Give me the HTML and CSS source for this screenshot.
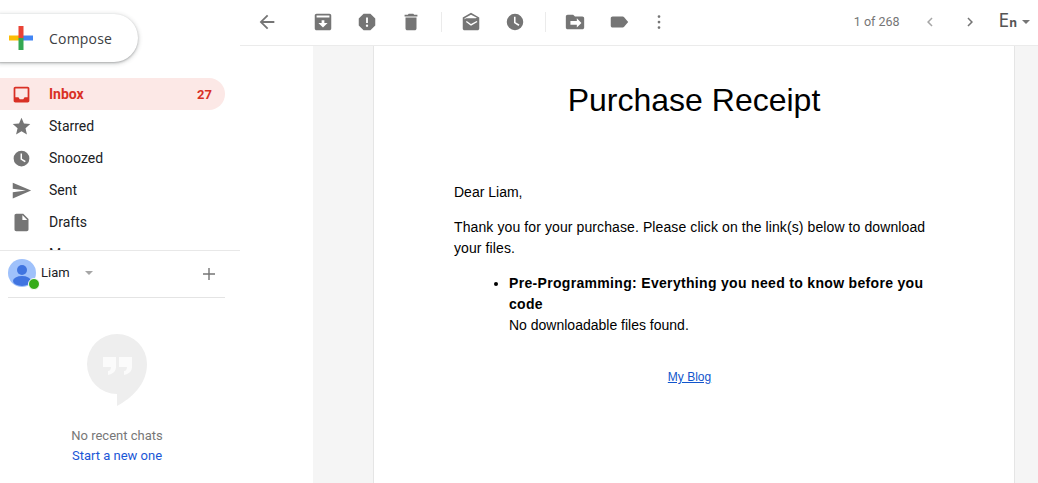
FILE: index.html
```html
<!DOCTYPE html>
<html lang="en">
<head>
    <meta charset="UTF-8">
    <meta name="viewport" content="width=device-width, initial-scale=1.0">
    <title>Purchase Receipt</title>
    <link rel="stylesheet" href="styles.css">
</head>
<body>
    <div class="app">
        <aside class="sidebar">
            <div class="compose-wrap">
                <button class="compose">
                    <svg class="compose-plus" width="24" height="24" viewBox="0 0 24 24">
                        <rect x="0" y="9.5" width="12" height="5" fill="#fbbc04"/>
                        <rect x="12" y="9.5" width="12" height="5" fill="#4285f4"/>
                        <rect x="9.5" y="0" width="5" height="12" fill="#ea4335"/>
                        <rect x="9.5" y="12" width="5" height="12" fill="#34a853"/>
                    </svg>
                    <span>Compose</span>
                </button>
            </div>

            <nav class="nav">
                <a class="nav-item active">
                    <svg class="nav-icon" viewBox="0 0 24 24"><path fill="#d93025" d="M19 3H5c-1.1 0-2 .9-2 2v14c0 1.1.9 2 2 2h14c1.1 0 2-.9 2-2V5c0-1.1-.9-2-2-2zm0 12h-3.500l-1.500 2.500h-4L8.500 15H5V5h14z"/></svg>
                    <span class="nav-label">Inbox</span>
                    <span class="nav-count">27</span>
                </a>
                <a class="nav-item">
                    <svg class="nav-icon" viewBox="0 0 24 24"><path fill="#757575" d="M12 17.300l6.200 3.700-1.600-7L22 9.200l-7.200-.6L12 2 9.200 8.600 2 9.200 7.500 14l-1.700 7z"/></svg>
                    <span class="nav-label">Starred</span>
                </a>
                <a class="nav-item">
                    <svg class="nav-icon" viewBox="0 0 24 24"><path fill="#757575" d="M12 3a9 9 0 1 0 0 18 9 9 0 0 0 0-18zm3.800 13.300L10.900 13V6.400h1.700v5.800l4.300 2.600z"/></svg>
                    <span class="nav-label">Snoozed</span>
                </a>
                <a class="nav-item">
                    <svg class="nav-icon" viewBox="0 0 24 24"><path fill="#757575" d="M2 21l21-9L2 3v7l15 2-15 2z"/></svg>
                    <span class="nav-label">Sent</span>
                </a>
                <a class="nav-item">
                    <svg class="nav-icon" viewBox="0 0 24 24"><path fill="#757575" d="M14 2H6c-1.100 0-2 .9-2 2v16c0 1.100.9 2 2 2h12c1.100 0 2-.9 2-2V8zm-1 7V3.500L18.500 9z"/></svg>
                    <span class="nav-label">Drafts</span>
                </a>
                <a class="nav-item">
                    <span class="nav-label nav-more">More</span>
                </a>
            </nav>

            <div class="hangouts">
                <div class="user-row">
                    <div class="avatar">
                        <svg width="28" height="28" viewBox="0 0 28 28">
                            <circle cx="14" cy="14" r="14" fill="#9fc1fb"/>
                            <circle cx="14" cy="11" r="5" fill="#4074e0"/>
                            <ellipse cx="14" cy="22" rx="9" ry="5" fill="#4074e0"/>
                        </svg>
                        <span class="status-dot"></span>
                    </div>
                    <span class="user-name">Liam</span>
                    <span class="user-caret"></span>
                    <svg class="user-add" width="14" height="14" viewBox="0 0 14 14"><path fill="#757575" d="M6.300 1h1.400v5.300H13v1.400H7.700V13H6.300V7.700H1V6.300h5.300z"/></svg>
                </div>
                <div class="chats">
                    <svg class="bubble" width="60" height="72" viewBox="0 0 60 72">
                        <path fill="#eeeeee" d="M30 0a30 30 0 0 0 0 60v12c15-8 30-22 30-42A30 30 0 0 0 30 0z"/>
                        <path fill="#fbfbfb" d="M16 23h13v10c0 4-3 7-8 8v-4c2 0 3-2 3-4h-8zM32 23h13v10c0 4-3 7-8 8v-4c2 0 3-2 3-4h-8z"/>
                    </svg>
                    <p class="no-chats">No recent chats</p>
                    <a class="new-chat">Start a new one</a>
                </div>
            </div>
        </aside>

        <main class="main">
            <div class="toolbar">
                <svg class="tool tool-back" viewBox="0 0 24 24"><path fill="#757575" d="M20 11H7.800l5.600-5.600L12 4l-8 8 8 8 1.400-1.400L7.800 13H20z"/></svg>
                <svg class="tool" viewBox="0 0 24 24"><path fill="#757575" d="M19 3H5c-1.100 0-2 .9-2 2v14c0 1.100.9 2 2 2h14c1.100 0 2-.9 2-2V5c0-1.100-.9-2-2-2zm-7 15l-5-5h3.500v-3h3v3H17zM5 7V5h14v2z"/></svg>
                <svg class="tool" viewBox="0 0 24 24"><path fill="#757575" d="M15.700 3H8.300L3 8.300v7.400L8.300 21h7.400l5.300-5.300V8.300zM12 17.300a1.300 1.300 0 1 1 0-2.600 1.300 1.300 0 0 1 0 2.600zm1-4.300h-2V7h2z"/></svg>
                <svg class="tool" viewBox="0 0 24 24"><path fill="#757575" d="M6 19c0 1.100.9 2 2 2h8c1.100 0 2-.9 2-2V7H6zM19 4h-3.500l-1-1h-5l-1 1H5v2h14z"/></svg>
                <span class="tool-sep"></span>
                <svg class="tool" viewBox="0 0 24 24"><path fill="#757575" d="M12 2L3 7v12c0 1.100.9 2 2 2h14c1.100 0 2-.9 2-2V7zM5 7.900L12 4l6.500 3.400-1.500.6H7c-1.100 0-2 .9-2 2zM19 12l-7 4-5.500-4 .8-1 4.700 3.300 6.200-3.300z"/></svg>
                <svg class="tool" viewBox="0 0 24 24"><path fill="#757575" d="M12 3a9 9 0 1 0 0 18 9 9 0 0 0 0-18zm3.800 13.300L10.900 13V6.400h1.700v5.800l4.300 2.600z"/></svg>
                <span class="tool-sep"></span>
                <svg class="tool" viewBox="0 0 24 24"><path fill="#757575" d="M20 6h-8l-2-2H4c-1.100 0-2 .9-2 2v12c0 1.100.9 2 2 2h16c1.100 0 2-.9 2-2V8c0-1.100-.9-2-2-2zm-6 12v-3H7v-4h7V8l5 5z"/></svg>
                <svg class="tool tool-label" viewBox="0 0 24 24"><path fill="#757575" d="M17.600 6.800C17.200 6.300 16.600 6 16 6L5 6c-1.100 0-2 .9-2 2v8c0 1.100.9 2 2 2h11c.6 0 1.200-.3 1.600-.8L22 12z"/></svg>
                <svg class="tool" viewBox="0 0 24 24"><path fill="#757575" d="M12 7.500a1.500 1.500 0 1 0 0-3 1.500 1.500 0 0 0 0 3zm0 6a1.500 1.500 0 1 0 0-3 1.500 1.500 0 0 0 0 3zm0 6a1.500 1.500 0 1 0 0-3 1.500 1.500 0 0 0 0 3z"/></svg>

                <div class="pager">
                    <span class="pager-text">1 of 268</span>
                    <svg class="chev" viewBox="0 0 24 24"><path fill="#a6a6a6" d="M15.400 7.400L14 6l-6 6 6 6 1.400-1.400L10.800 12z"/></svg>
                    <svg class="chev" viewBox="0 0 24 24"><path fill="#757575" d="M8.600 16.600L10 18l6-6-6-6-1.400 1.400L13.200 12z"/></svg>
                    <span class="lang">E<small>n</small></span>
                    <span class="lang-caret"></span>
                </div>
            </div>

            <div class="viewer">
                <div class="gutter">
                    <div class="page">
                        <h1 class="receipt-title">Purchase Receipt</h1>
                        <p class="receipt-text">Dear Liam,</p>
                        <p class="receipt-text receipt-thanks">Thank you for your purchase. Please click on the link(s) below to download your files.</p>
                        <ul class="receipt-list">
                            <li><strong>Pre-Programming: Everything you need to know before you code</strong><br>No downloadable files found.</li>
                        </ul>
                        <a class="blog-link" href="#">My Blog</a>
                    </div>
                </div>
            </div>
        </main>
    </div>
</body>
</html>
```

FILE: styles.css
```css
* {
    box-sizing: border-box;
}

html, body {
    height: 100%;
}

body {
    margin: 0;
    overflow: hidden;
    background: #fff;
    font-family: "Liberation Sans", Arial, sans-serif;
    color: #000;
}

.app {
    display: flex;
    height: 100vh;
}

/* Sidebar */
.sidebar {
    width: 240px;
    flex-shrink: 0;
    display: flex;
    flex-direction: column;
    height: 100%;
}

.compose-wrap {
    padding: 14px 0 16px;
    height: 78px;
}

.compose {
    width: 139px;
    height: 48px;
    margin-left: -1px;
    padding: 0 0 0 10px;
    display: flex;
    align-items: center;
    gap: 16px;
    background: #fff;
    border: none;
    border-radius: 0 24px 24px 0;
    box-shadow: 0 1px 2px rgba(60, 64, 67, 0.3), 0 1px 4px 1px rgba(60, 64, 67, 0.2);
    font-family: "Open Sans", sans-serif;
    font-size: 14px;
    letter-spacing: 0.2px;
    color: #3c4043;
}

.nav {
    height: 172px;
    overflow: hidden;
    flex-shrink: 0;
}

.nav-item {
    display: flex;
    align-items: center;
    width: 225px;
    height: 32px;
    padding: 0 13px 0 11px;
    border-radius: 0 16px 16px 0;
    font-family: Roboto, sans-serif;
    font-size: 14px;
    color: #202124;
}

.nav-item.active {
    background: #fce8e6;
    color: #d93025;
    font-weight: 700;
}

.nav-icon {
    width: 21px;
    height: 21px;
    margin-right: 17px;
    flex-shrink: 0;
}

.nav-label {
    flex: 1;
}

.nav-more {
    padding-left: 38px;
}

.nav-count {
    font-size: 13px;
}

.hangouts {
    flex: 1;
    border-top: 1px solid #e8e8e8;
}

.user-row {
    display: flex;
    align-items: center;
    height: 47px;
    margin: 0 15px 0 8px;
    border-bottom: 1px solid #e4e4e4;
}

.avatar {
    position: relative;
    width: 28px;
    height: 28px;
    margin-right: 5px;
    margin-top: -3px;
}

.avatar svg {
    display: block;
}

.status-dot {
    position: absolute;
    right: -4px;
    bottom: -3px;
    width: 12px;
    height: 12px;
    border-radius: 50%;
    background: #35ac19;
    border: 1px solid #fff;
}

.user-name {
    font-family: Roboto, sans-serif;
    font-size: 13px;
    color: #202124;
    margin-top: -3px;
    width: 44px;
}

.user-caret {
    width: 0;
    height: 0;
    border-left: 4px solid transparent;
    border-right: 4px solid transparent;
    border-top: 4px solid #a6a6a6;
    margin-top: -2px;
}

.user-add {
    margin-left: auto;
    margin-right: 9px;
}

.chats {
    display: flex;
    flex-direction: column;
    align-items: center;
    padding-top: 36px;
    margin-right: 6px;
}

.bubble {
    display: block;
}

.no-chats {
    margin: 20px 0 0;
    font-family: Roboto, sans-serif;
    font-size: 13px;
    line-height: 20px;
    color: #777;
}

.new-chat {
    font-family: Roboto, sans-serif;
    font-size: 13px;
    line-height: 20px;
    color: #1a56d6;
}

/* Main area */
.main {
    flex: 1;
    min-width: 0;
    display: flex;
    flex-direction: column;
}

.toolbar {
    height: 46px;
    flex-shrink: 0;
    display: flex;
    align-items: center;
    padding: 0 0 2px 16px;
    border-bottom: 1px solid #ebebeb;
}

.tool {
    width: 22px;
    height: 22px;
    margin-right: 22px;
    flex-shrink: 0;
}

.tool-back {
    margin-right: 34px;
}

.tool-label {
    margin-right: 18px;
}

.tool-sep {
    width: 1px;
    height: 20px;
    background: #ebebeb;
    margin: 0 18px 0 -3px;
}

.pager {
    margin-left: auto;
    display: flex;
    align-items: center;
    padding-right: 8px;
}

.pager-text {
    font-family: Roboto, sans-serif;
    font-size: 12.500px;
    color: #757575;
    margin-right: 21px;
}

.chev {
    width: 18px;
    height: 18px;
    margin-right: 22px;
}

.lang {
    font-family: "Noto Sans", sans-serif;
    font-size: 19px;
    line-height: 20px;
    color: #555;
    margin-left: -2px;
    margin-right: 5px;
}

.lang small {
    font-size: 12px;
    font-weight: 700;
}

.lang-caret {
    width: 0;
    height: 0;
    border-left: 4px solid transparent;
    border-right: 4px solid transparent;
    border-top: 4px solid #757575;
}

.viewer {
    flex: 1;
    min-height: 0;
    padding-left: 73px;
}

.gutter {
    height: 100%;
    background: #f5f5f5;
    padding: 0 23px 0 60px;
}

.page {
    height: 100%;
    background: #fff;
    border-left: 1px solid #e5e5e5;
    border-right: 1px solid #e5e5e5;
    padding: 36px 80px 0 80px;
}

.receipt-title {
    margin: 0 0 63px;
    text-align: center;
    font-size: 32px;
    line-height: 37px;
    font-weight: 400;
}

.receipt-text {
    margin: 0 0 14px;
    font-size: 14px;
    line-height: 21px;
}

.receipt-thanks {
    letter-spacing: 0.1px;
}

.receipt-list {
    margin: 0 0 34px;
    padding-left: 55px;
    font-size: 14px;
    line-height: 21px;
}

.receipt-list strong {
    letter-spacing: 0.32px;
}

.blog-link {
    display: block;
    text-align: center;
    font-size: 12px;
    color: #15c;
    margin-right: 9px;
}
```
